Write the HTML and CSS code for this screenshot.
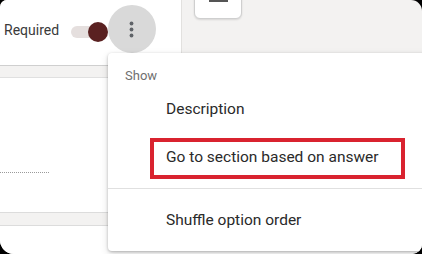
FILE: index.html
```html
<!DOCTYPE html>
<html>
<head>
<meta charset="utf-8">
<link rel="stylesheet" href="styles.css">
</head>
<body>
<div class="frame">
  <div class="top">
    <div class="card-top">
      <span class="required">Required</span>
      <span class="toggle"><span class="track"></span><span class="thumb"></span></span>
      <span class="more">
        <svg width="48" height="48" viewBox="0 0 48 48"><circle cx="24" cy="24" r="24" fill="#d9d9d9"/><circle cx="23.5" cy="18.5" r="1.9" fill="#5f6368"/><circle cx="23.5" cy="24.5" r="1.9" fill="#5f6368"/><circle cx="23.5" cy="30.5" r="1.9" fill="#5f6368"/></svg>
      </span>
    </div>
    <div class="side">
      <div class="tool"><span class="tool-bar"></span></div>
    </div>
  </div>
  <div class="band band1"></div>
  <div class="card card2"><div class="dotted"></div></div>
  <div class="band band2"></div>
  <div class="card card3"></div>

  <div class="menu">
    <div class="menu-head">Show</div>
    <div class="menu-item">Description</div>
    <div class="menu-item highlighted">Go to section based on answer</div>
    <div class="menu-sep"></div>
    <div class="menu-item">Shuffle option order</div>
  </div>
</div>
</body>
</html>
```
FILE: styles.css
```css
html, body {
  margin: 0;
  padding: 0;
  background: #000;
}
.frame {
  position: relative;
  width: 422px;
  height: 254px;
  overflow: hidden;
  background: #f3f2f1;
  border-radius: 7px 11px 10px 14px;
  display: flex;
  flex-direction: column;
  font-family: Roboto, "Liberation Sans", sans-serif;
}
.top {
  display: flex;
  height: 66px;
  flex: none;
}
.card-top {
  width: 181px;
  background: #fff;
  border-bottom: 1px solid #cfcfcf;
  box-sizing: border-box;
  display: flex;
  align-items: flex-start;
}
.required {
  margin-left: 4px;
  margin-top: 22px;
  font-size: 14px;
  color: #3a3a3a;
  line-height: 17px;
}
.toggle {
  position: relative;
  width: 38px;
  height: 20px;
  margin-left: 12px;
  margin-top: 22px;
}
.track {
  position: absolute;
  left: 0;
  top: 4px;
  width: 30px;
  height: 12px;
  border-radius: 6px;
  background: #e5dfde;
}
.thumb {
  position: absolute;
  left: 17px;
  top: 0;
  width: 20px;
  height: 20px;
  border-radius: 50%;
  background: #5a2121;
}
.more {
  margin-left: -1px;
  margin-top: 5px;
  width: 48px;
  height: 48px;
  display: block;
}
.more svg { display: block; }
.side {
  flex: 1;
  border-left: 1px solid #e2e1df;
  height: 53px;
  padding-left: 12px;
}
.tool {
  width: 48px;
  height: 29px;
  margin-top: -10px;
  background: #fff;
  border: 1px solid #cfcfcf;
  border-radius: 6px;
  box-shadow: 0 1px 2px rgba(0,0,0,.12);
  display: flex;
  justify-content: center;
  align-items: flex-start;
  padding-top: 9px;
  box-sizing: border-box;
}
.tool-bar {
  width: 19px;
  height: 2px;
  background: #555;
}
.band { flex: none; background: #f3f2f1; }
.band1 { height: 11px; }
.band2 { height: 12px; border-top: 1px solid #dcdcdc; }
.card { background: #fff; flex: none; }
.card2 {
  height: 135px;
  border-top: 1px solid #e0e0e0;
  box-sizing: border-box;
  padding-top: 94px;
}
.card3 {
  flex: 1;
  border-top: 1px solid #dcdcdc;
}
.dotted {
  width: 49px;
  border-top: 1px dotted #9a9a9a;
}
.menu {
  position: absolute;
  left: 108px;
  top: 53px;
  width: 330px;
  height: 198px;
  background: #fff;
  border-radius: 4px;
  box-shadow: 0 1px 3px rgba(0,0,0,.25), 0 3px 8px rgba(0,0,0,.12);
  box-sizing: border-box;
}
.menu-head {
  height: 32px;
  box-sizing: border-box;
  padding: 15px 0 0 17px;
  font-size: 13px;
  line-height: 16px;
  color: #6f6f6f;
}
.menu-item {
  position: relative;
  height: 48px;
  line-height: 48px;
  padding-left: 58px;
  font-size: 15.5px;
  color: #2a2a2a;
}
.highlighted::after {
  content: "";
  position: absolute;
  left: 42px;
  top: 5px;
  width: 255px;
  height: 41px;
  border: 4px solid #d9232f;
  box-sizing: border-box;
}
.menu-sep {
  margin: 7px 0;
  height: 1px;
  background: #e0e0e0;
}
```
